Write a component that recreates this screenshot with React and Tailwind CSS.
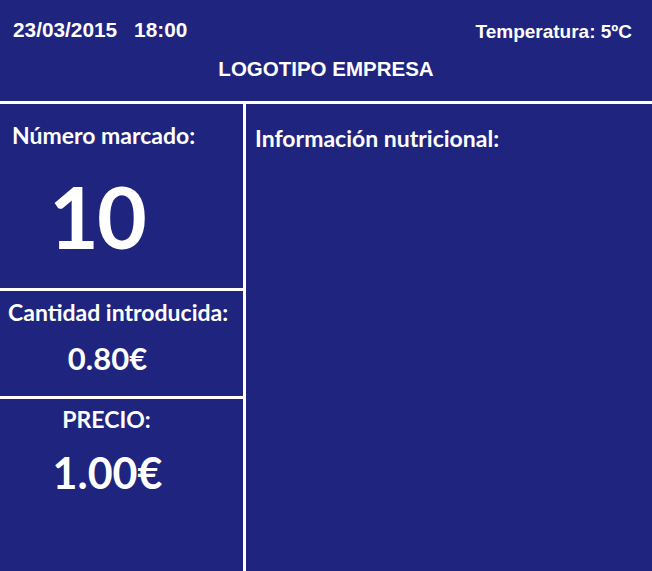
import React from "react";

export default function App() {
  return (
    <div className="w-[652px] h-[571px] bg-[#1f247e] text-white overflow-hidden flex flex-col font-['Lato',sans-serif] font-bold">
      {/* header */}
      <header className="h-[104px] border-b-[3px] border-white font-['Liberation_Sans',Arial,sans-serif]">
        <div className="flex justify-between items-start pt-[20px] pl-[13px] pr-[20px]">
          <div className="text-[20.8px] leading-none whitespace-pre">
            23/03/2015<span className="ml-[17px]">18:00</span>
          </div>
          <div className="text-[19px] leading-none mt-[2px]">Temperatura: 5ºC</div>
        </div>
        <div className="mt-[18px] text-center text-[20.5px] leading-none">LOGOTIPO EMPRESA</div>
      </header>

      <div className="flex flex-1">
        {/* left column */}
        <div className="w-[246px] border-r-[3px] border-white flex flex-col">
          <section className="h-[187px] border-b-[3px] border-white">
            <div className="pt-[20px] pl-[12px] text-[23px] leading-none">Número marcado:</div>
            <div className="mt-[26px] w-[194px] text-center text-[86px] leading-none tracking-[-2px]">10</div>
          </section>

          <section className="h-[108px] border-b-[3px] border-white">
            <div className="pt-[10px] pl-[8px] text-[23px] leading-none whitespace-nowrap">
              Cantidad introducida:
            </div>
            <div className="mt-[19px] w-[215px] text-center text-[31px] leading-none">0.80€</div>
          </section>

          <section className="flex-1">
            <div className="pt-[9px] w-[213px] text-center text-[23px] leading-none">PRECIO:</div>
            <div className="mt-[20px] w-[215px] text-center text-[43px] leading-none">1.00€</div>
          </section>
        </div>

        {/* right column */}
        <div className="flex-1 pt-[23px] pl-[9px]">
          <div className="text-[23px] leading-none">Información nutricional:</div>
        </div>
      </div>
    </div>
  );
}
